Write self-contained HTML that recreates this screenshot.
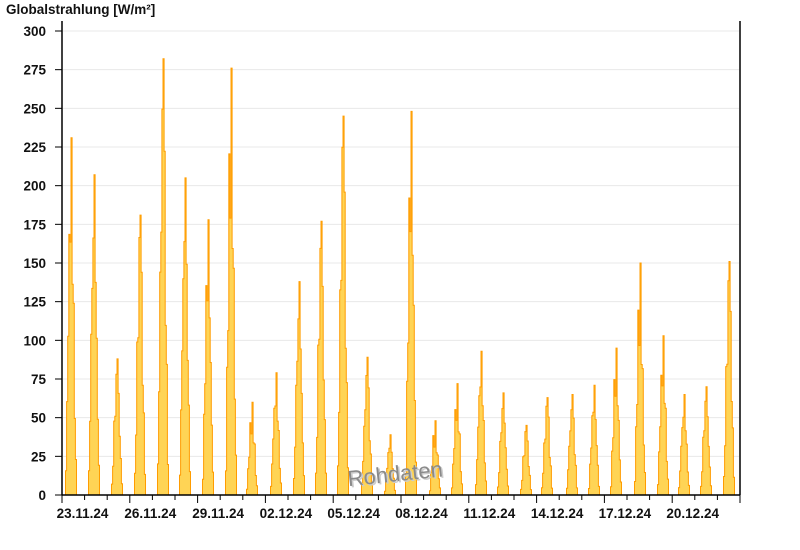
<!DOCTYPE html>
<html><head><meta charset="utf-8"><style>
body{margin:0;background:#fff;width:800px;height:550px;overflow:hidden}
svg{display:block}
text{font-family:"Liberation Sans",Arial,sans-serif;font-weight:bold;fill:#111}
</style></head><body>
<svg id="s" width="800" height="550" xmlns="http://www.w3.org/2000/svg"></svg>
<script>
var s=document.getElementById('s'),h='';
var X0=62,X1=740,Y0=495,k=464/300;
h+='<text x="6" y="14" font-size="13.5">Globalstrahlung [W/m²]</text>';
for(var v=0;v<=300;v+=25){var y=Y0-v*k;
 if(v>0)h+='<line x1="63" x2="739" y1="'+y+'" y2="'+y+'" stroke="#e8e8e8" stroke-width="1"/>';
 h+='<line x1="55" x2="62" y1="'+y+'" y2="'+y+'" stroke="#000"/>';
 h+='<text x="46" y="'+(y+5)+'" font-size="13.5" text-anchor="end">'+v+'</text>';}
var peaks=[[71,231],[94,207],[117,88],[140,181],[163,282],[185,205],[208,178],[231,276],[252,60],[276,79],[299,138],[321,177],[343,245],[367,89],[390,39],[411,248],[435,48],[457,72],[481,93],[503,66],[526,45],[547,63],[572,65],[594,71],[616,95],[640,150],[663,103],[684,65],[706,70],[729,151]];
var prof=[0.08,0.3,0.55,0.8,0.92,1,0.8,0.55,0.3,0.1];
peaks.forEach(function(p,i){
 var w=1.1,x=p[0]-5.5,pts=[[x,Y0]];
 for(var j=0;j<prof.length;j++){var f=prof[j];if(j!=5)f*=0.85+0.15*Math.sin(i*7+j*3);
  var y=Y0-p[1]*f*k;pts.push([x+j*w,y]);pts.push([x+(j+1)*w,y]);}
 pts.push([x+prof.length*w,Y0]);
 h+='<polygon points="'+pts.map(function(a){return a[0].toFixed(1)+','+a[1].toFixed(1)}).join(' ')+'" fill="#ffd455" stroke="#ff9c00" stroke-width="1"/>';
});
h+='<line x1="62" x2="62" y1="21" y2="495" stroke="#000" stroke-width="1.5"/>';
h+='<line x1="740" x2="740" y1="21" y2="495" stroke="#000" stroke-width="1.5"/>';
h+='<line x1="62" x2="740" y1="495" y2="495" stroke="#000" stroke-width="1.5"/>';
var lab=['23.11.24','26.11.24','29.11.24','02.12.24','05.12.24','08.12.24','11.12.24','14.12.24','17.12.24','20.12.24'];
for(var d=0;d<=30;d++){var x=X0+d*22.6;if(x>741)break;
 var big=d%3==0;h+='<line x1="'+x+'" x2="'+x+'" y1="495" y2="'+(big?503:500)+'" stroke="#000"/>';
 if(big&&lab[d/3])h+='<text x="'+(x+20.5)+'" y="518" font-size="13.5" text-anchor="middle">'+lab[d/3]+'</text>';}
h+='<g transform="rotate(-6 398 470)"><text x="347" y="481" font-size="22" style="font-weight:normal;fill:#ccc" transform="translate(1.5,1.5)">Rohdaten</text><text x="347" y="481" font-size="22" style="font-weight:normal;fill:#8a8a8a">Rohdaten</text></g>';
s.innerHTML=h;
</script>
</body></html>
